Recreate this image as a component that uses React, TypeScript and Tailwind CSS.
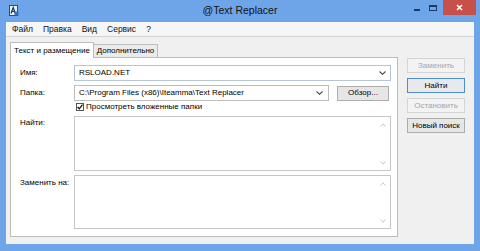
import React from "react";

const Chevron = () => (
  <svg width="7" height="4" viewBox="0 0 7 4">
    <path d="M0.5 0.5 L3.5 3.3 L6.5 0.5" fill="none" stroke="#444" strokeWidth="1.1" />
  </svg>
);

const ScrollArrow = ({ up }: { up?: boolean }) => (
  <svg width="6" height="4" viewBox="0 0 6 4">
    <path d={up ? "M0.5 3.5 L3 0.8 L5.5 3.5" : "M0.5 0.5 L3 3.2 L5.5 0.5"} fill="none" stroke="#c4c4c4" strokeWidth="1" />
  </svg>
);

const TextArea = ({ h }: { h: string }) => (
  <div className={`flex-1 mr-[6px] border border-[#c6c6c6] bg-white flex justify-end ${h}`}>
    <div className="w-[14px] flex flex-col items-center justify-between pt-[6px] pb-[5px]">
      <ScrollArrow up />
      <ScrollArrow />
    </div>
  </div>
);

export default function App() {
  const font = { fontFamily: '"Liberation Sans", Arial, sans-serif' };
  return (
    <div className="w-[480px] h-[251px] bg-[#6ea5e8] flex flex-col overflow-hidden" style={font}>
      {/* Title bar */}
      <div className="h-[22px] relative flex items-center shrink-0">
        <svg width="10" height="11" viewBox="0 0 10 11" className="ml-[9px] -mt-[2px]">
          <rect x="0.5" y="0.5" width="8" height="10" fill="#eef3f9" stroke="#2a4d7a" />
          <path d="M2 8.5 L4.2 2.5 L6.4 8.5 M2.8 6.5 L5.6 6.5" stroke="#14345f" strokeWidth="1.2" fill="none" />
          <rect x="5.5" y="6.5" width="4" height="4" fill="#3a6fb3" />
        </svg>
        <div className="absolute left-0 right-0 top-[4px] text-center text-[10.5px] text-[#111] leading-[13px]">
          @Text Replacer
        </div>
        <div className="absolute right-[4px] top-0 flex items-start">
          <div className="w-[20px] h-[15px] flex items-center justify-center">
            <div className="w-[6px] h-[2px] bg-[#1c3a66] mt-[4px]" />
          </div>
          <div className="w-[12px] h-[15px] flex items-center justify-center">
            <div className="w-[8px] h-[6px] border border-[#1c3a66] border-t-[2px]" />
          </div>
          <div className="ml-[4px] w-[33px] h-[15px] bg-[#c7504a] flex items-center justify-center">
            <svg width="7" height="7" viewBox="0 0 7 7">
              <path d="M1 1 L6 6 M6 1 L1 6" stroke="#fff" strokeWidth="1.5" />
            </svg>
          </div>
        </div>
      </div>

      {/* Client area */}
      <div className="flex-1 mx-[6px] mb-[7px] bg-[#f0f0f0] flex flex-col text-[8px] text-black">
        {/* Menu */}
        <div className="h-[15px] bg-[#f6f6f6] border-b border-[#d2d2d2] flex items-center pl-[6px] gap-[10px] text-[8.5px] leading-none shrink-0 text-[#111]">
          <span>Файл</span>
          <span>Правка</span>
          <span>Вид</span>
          <span>Сервис</span>
          <span>?</span>
        </div>

        <div className="flex flex-1 pt-[5px]">
          {/* Left: tabs + panel */}
          <div className="ml-[4px] w-[388px] flex flex-col">
            <div className="h-[15px] flex items-end text-[8px] leading-none whitespace-nowrap">
              <div className="h-[16px] w-[84px] bg-white border border-b-0 border-[#bcbcbc] flex items-center justify-center relative z-10 -mb-[1px]">
                Текст и размещение
              </div>
              <div className="h-[13px] w-[64px] bg-[#ebebeb] border border-l-0 border-b-0 border-[#bcbcbc] flex items-center justify-center">
                Дополнительно
              </div>
            </div>
            <div className="h-[180px] bg-white border border-[#bcbcbc] pt-[7px] pl-[9px] flex flex-col leading-none">
              <div className="flex items-center h-[16px]">
                <div className="w-[54px]">Имя:</div>
                <div className="flex-1 mr-[6px] h-[16px] border border-[#b5c5d5] bg-white flex items-center justify-between pl-[4px] pr-[4px]">
                  <span>RSLOAD.NET</span>
                  <Chevron />
                </div>
              </div>
              <div className="flex items-center h-[16px] mt-[4px]">
                <div className="w-[54px]">Папка:</div>
                <div className="w-[255px] h-[16px] border border-[#bdbdbd] bg-white flex items-center justify-between pl-[4px] pr-[5px]">
                  <span className="whitespace-nowrap">C:\Program Files (x86)\Iteamma\Text Replacer</span>
                  <Chevron />
                </div>
                <div className="ml-[8px] w-[52px] h-[15px] border border-[#adadad] bg-[#e6e6e6] flex items-center justify-center">
                  Обзор...
                </div>
              </div>
              <div className="flex items-center h-[8px] mt-[2px] pl-[56px]">
                <div className="w-[8px] h-[8px] border border-[#555] bg-white flex items-center justify-center">
                  <svg width="6" height="6" viewBox="0 0 6 6">
                    <path d="M0.6 3 L2.3 4.8 L5.5 0.6" fill="none" stroke="#111" strokeWidth="1.3" />
                  </svg>
                </div>
                <span className="ml-[2px] whitespace-nowrap">Просмотреть вложенные папки</span>
              </div>
              <div className="flex mt-[5px]">
                <div className="w-[54px] pt-[3px]">Найти:</div>
                <TextArea h="h-[55px]" />
              </div>
              <div className="flex mt-[4px]">
                <div className="w-[54px] pt-[4px] whitespace-nowrap">Заменить на:</div>
                <TextArea h="h-[54px]" />
              </div>
            </div>
          </div>

          {/* Right buttons */}
          <div className="ml-[9px] w-[58px] pt-[16px] flex flex-col gap-[5px] text-[8px] leading-none whitespace-nowrap">
            <div className="h-[15px] border border-[#d4d4d4] bg-[#f3f3f3] text-[#a6a6a6] flex items-center justify-center">Заменить</div>
            <div className="h-[15px] border border-[#4f8ccc] bg-[#e7e9ec] flex items-center justify-center">Найти</div>
            <div className="h-[15px] border border-[#d4d4d4] bg-[#f3f3f3] text-[#a6a6a6] flex items-center justify-center">Остановить</div>
            <div className="h-[15px] border border-[#adadad] bg-[#e6e6e6] flex items-center justify-center">Новый поиск</div>
          </div>
        </div>
      </div>
    </div>
  );
}
